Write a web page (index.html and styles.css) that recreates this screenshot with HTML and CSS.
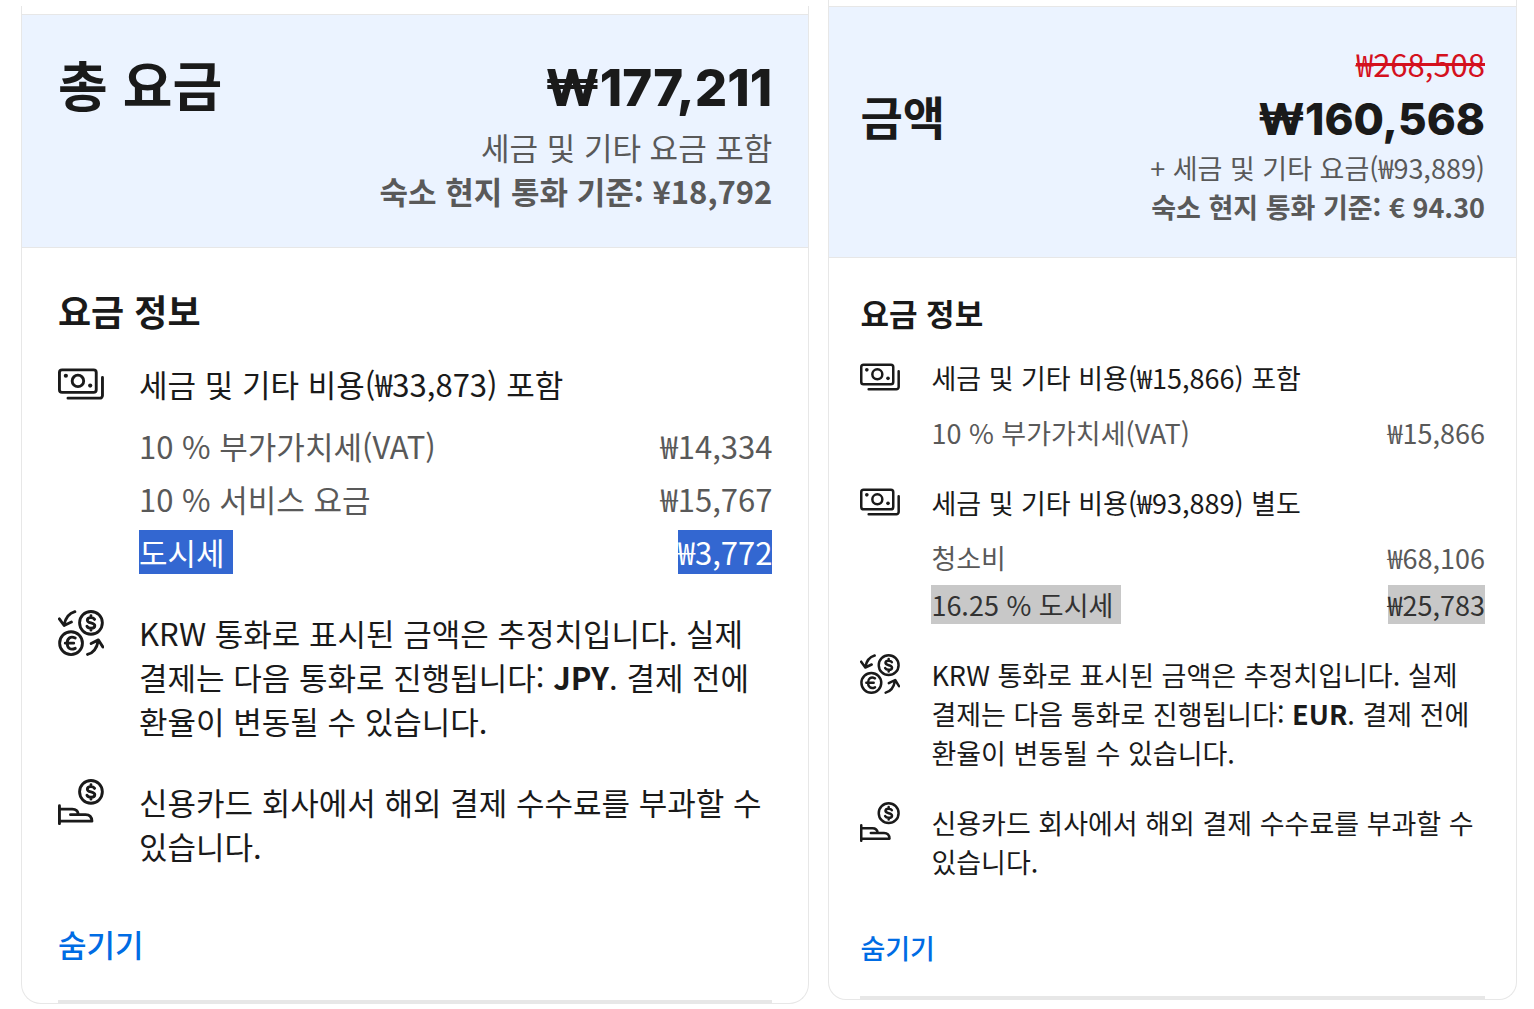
FILE: index.html
```html
<!DOCTYPE html>
<html lang="ko">

<head>
  <meta charset="UTF-8" />
  <meta name="viewport" content="width=device-width, initial-scale=1.0" />
  <title>요금 정보</title>
  <link rel="stylesheet" href="styles.css">
</head>

<body>

  <svg class="symbols" aria-hidden="true">
    <symbol id="money" viewBox="0 0 24 24">
      <rect x="0.75" y="4.6" width="19.2" height="11.8" rx="1.4" />
      <circle cx="10.4" cy="10.4" r="3" />
      <circle class="dot" cx="4.1" cy="7.7" r="1.1" />
      <circle class="dot" cx="16.8" cy="12.8" r="1.1" />
      <path d="M23.2 8.6v9.4a1.4 1.4 0 0 1-1.4 1.4H5.2" />
    </symbol>
    <symbol id="coin" viewBox="0 0 24 24">
      <circle cx="17.2" cy="6.7" r="5.95" />
      <path d="M19.1 4.9c-.4-.6-1.1-.9-1.9-.9-1.1 0-1.9.5-1.9 1.3 0 1.9 3.9.9 3.9 2.9 0 .8-.9 1.3-2 1.3-.9 0-1.7-.3-2.1-1M17.2 3v1M17.2 9.5v1" />
    </symbol>
    <symbol id="exchange" viewBox="0 0 24 24">
      <use href="#coin" />
      <circle cx="6.8" cy="17.3" r="5.95" />
      <path d="M9 14.6c-2.6-1.2-4.2.3-4.2 2.7s1.6 3.9 4.2 2.7M3.8 17.3h4.4" />
      <path d="M8.8.9C5.9 1.7 3.9 4 3.2 7.8M.7 4.6l2.5 3.5L7 6.3" />
      <path d="M15.4 23.2c2.9-.8 4.9-3.3 5.6-7.2M17.3 17.5l3.8-1.9 2.3 3.7" />
    </symbol>
    <symbol id="hand" viewBox="0 0 24 24">
      <use href="#coin" />
      <path d="M.75 13.9v9.4M.75 15.7h6.7c1.8 0 3 1.1 3.2 2.8M6.500 18.600h7.900c2 0 3.200 1.200 3.300 3.400H.75" />
    </symbol>
  </svg>

  <main class="page">

    <section class="panel large">
      <header class="total">
        <h1>총 요금</h1>
        <strong class="price">₩177,211</strong>
        <p class="note">세금 및 기타 요금 포함</p>
        <p class="note local">숙소 현지 통화 기준: ¥18,792</p>
      </header>
      <div class="details">
        <h2>요금 정보</h2>

        <div class="item">
          <svg class="icon" aria-hidden="true"><use href="#money" /></svg>
          <div class="text">
            <p>세금 및 기타 비용(₩33,873) 포함</p>
            <table class="fees">
              <tr>
                <td>10 % 부가가치세(VAT)</td>
                <td>₩14,334</td>
              </tr>
              <tr>
                <td>10 % 서비스 요금</td>
                <td>₩15,767</td>
              </tr>
              <tr class="selected">
                <td><span>도시세</span></td>
                <td><span>₩3,772</span></td>
              </tr>
            </table>
          </div>
        </div>

        <div class="item">
          <svg class="icon" aria-hidden="true"><use href="#exchange" /></svg>
          <p class="text">KRW 통화로 표시된 금액은 추정치입니다. 실제 결제는 다음 통화로 진행됩니다: <b>JPY</b>. 결제 전에 환율이 변동될 수 있습니다.</p>
        </div>

        <div class="item">
          <svg class="icon" aria-hidden="true"><use href="#hand" /></svg>
          <p class="text">신용카드 회사에서 해외 결제 수수료를 부과할 수 있습니다.</p>
        </div>

        <button class="hide" type="button">숨기기</button>
        <hr />
      </div>
    </section>

    <section class="panel small">
      <header class="total">
        <del class="old">₩268,508</del>
        <h1>금액</h1>
        <strong class="price">₩160,568</strong>
        <p class="note">+ 세금 및 기타 요금(₩93,889)</p>
        <p class="note local">숙소 현지 통화 기준: € 94.30</p>
      </header>
      <div class="details">
        <h2>요금 정보</h2>

        <div class="item">
          <svg class="icon" aria-hidden="true"><use href="#money" /></svg>
          <div class="text">
            <p>세금 및 기타 비용(₩15,866) 포함</p>
            <table class="fees">
              <tr>
                <td>10 % 부가가치세(VAT)</td>
                <td>₩15,866</td>
              </tr>
            </table>
          </div>
        </div>

        <div class="item">
          <svg class="icon" aria-hidden="true"><use href="#money" /></svg>
          <div class="text">
            <p>세금 및 기타 비용(₩93,889) 별도</p>
            <table class="fees">
              <tr>
                <td>청소비</td>
                <td>₩68,106</td>
              </tr>
              <tr class="selected">
                <td><span>16.25 % 도시세</span></td>
                <td><span>₩25,783</span></td>
              </tr>
            </table>
          </div>
        </div>

        <div class="item">
          <svg class="icon" aria-hidden="true"><use href="#exchange" /></svg>
          <p class="text">KRW 통화로 표시된 금액은 추정치입니다. 실제 결제는 다음 통화로 진행됩니다: <b>EUR</b>. 결제 전에 환율이 변동될 수 있습니다.</p>
        </div>

        <div class="item">
          <svg class="icon" aria-hidden="true"><use href="#hand" /></svg>
          <p class="text">신용카드 회사에서 해외 결제 수수료를 부과할 수 있습니다.</p>
        </div>

        <button class="hide" type="button">숨기기</button>
        <hr />
      </div>
    </section>

  </main>

</body>

</html>
```
FILE: styles.css
```css
* {
  box-sizing: border-box;
}

body {
  margin: 0;
  background-color: white;
  color: #1a1a1a;
  font-family: "Noto Sans CJK KR", sans-serif;
}

h1,
h2,
p {
  margin: 0;
}

.symbols {
  display: none;
}

.page {
  display: flex;
  align-items: flex-start;
  gap: 19px;
  padding: 0 17px 0 21px;
}

.panel {
  min-width: 0;
  border: 1px solid #e7e7e7;
  border-top: none;
  font-size: var(--text);
  line-height: var(--line);
}

.large {
  --text: 31px;
  --line: 44px;
  --title: 54px;
  --title-line: 66px;
  --price: 51px;
  --price-line: 74px;
  --heading: 36px;
  --side: 36px;
  --icon: 46px;
  --icon-gap: 35px;
  --row-gap: 9px;
  --item-gap: 37px;
  flex: 788;
  margin-top: 6px;
  padding-top: 8px;
  border-radius: 0 0 20px 20px;
}

.small {
  --text: 27px;
  --line: 39px;
  --title: 46px;
  --title-line: 50px;
  --price: 44px;
  --price-line: 58px;
  --heading: 31px;
  --side: 31px;
  --icon: 40px;
  --icon-gap: 31px;
  --row-gap: 8px;
  --item-gap: 31px;
  flex: 688;
  padding-top: 6px;
  border-radius: 0 0 18px 18px;
}

.total {
  display: grid;
  grid-template-columns: auto 1fr;
  padding: 36px var(--side) 34px;
  background-color: #ebf3ff;
  border-top: 1px solid #e7e7e7;
  border-bottom: 1px solid #e7e7e7;
  text-align: right;
}

.small .total {
  padding-top: 31px;
  padding-bottom: 31px;
}

h1 {
  font-size: var(--title);
  line-height: var(--title-line);
}

.price {
  font-family: "Inter", sans-serif;
  font-size: var(--price);
  font-weight: 800;
  line-height: var(--price-line);
}

.old {
  grid-column: 1 / 3;
  color: #d4111e;
  font-size: 31px;
  line-height: 52px;
}

.note {
  grid-column: 1 / 3;
  color: #595959;
}

.local {
  font-weight: bold;
}

.details {
  padding: 40px var(--side) 0;
}

.small .details {
  padding-top: 35px;
}

h2 {
  margin-bottom: 30px;
  font-size: var(--heading);
  line-height: var(--line);
}

.small h2 {
  margin-bottom: 26px;
}

.item {
  display: flex;
  align-items: flex-start;
  gap: var(--icon-gap);
  margin-bottom: var(--item-gap);
}

.text {
  flex: 1;
  word-break: keep-all;
}

.icon {
  flex: none;
  width: var(--icon);
  height: var(--icon);
  margin-top: -1px;
  fill: none;
  stroke: #1a1a1a;
  stroke-width: 1.5;
  stroke-linecap: round;
  stroke-linejoin: round;
}

.dot {
  fill: #1a1a1a;
  stroke: none;
}

.fees {
  width: 100%;
  margin-top: var(--row-gap);
  border-collapse: collapse;
  color: #595959;
}

.fees td {
  padding: var(--row-gap) 0 0;
}

.fees td:last-child {
  text-align: right;
}

.selected span {
  display: inline-block;
  vertical-align: top;
  background-color: #3367d1;
  color: white;
}

.selected td:first-child span {
  padding-right: 8px;
}

.small .selected span {
  background-color: #c8c8c8;
  color: #323232;
}

.hide {
  display: block;
  margin: 54px 0 34px;
  padding: 0;
  background: none;
  border: none;
  color: #006ce4;
  font-family: inherit;
  font-size: inherit;
  font-weight: 500;
  line-height: inherit;
}

.small .hide {
  margin: 47px 0 29px;
}

hr {
  height: 3px;
  margin: 0;
  background-color: #e7e7e7;
  border: none;
}
```
